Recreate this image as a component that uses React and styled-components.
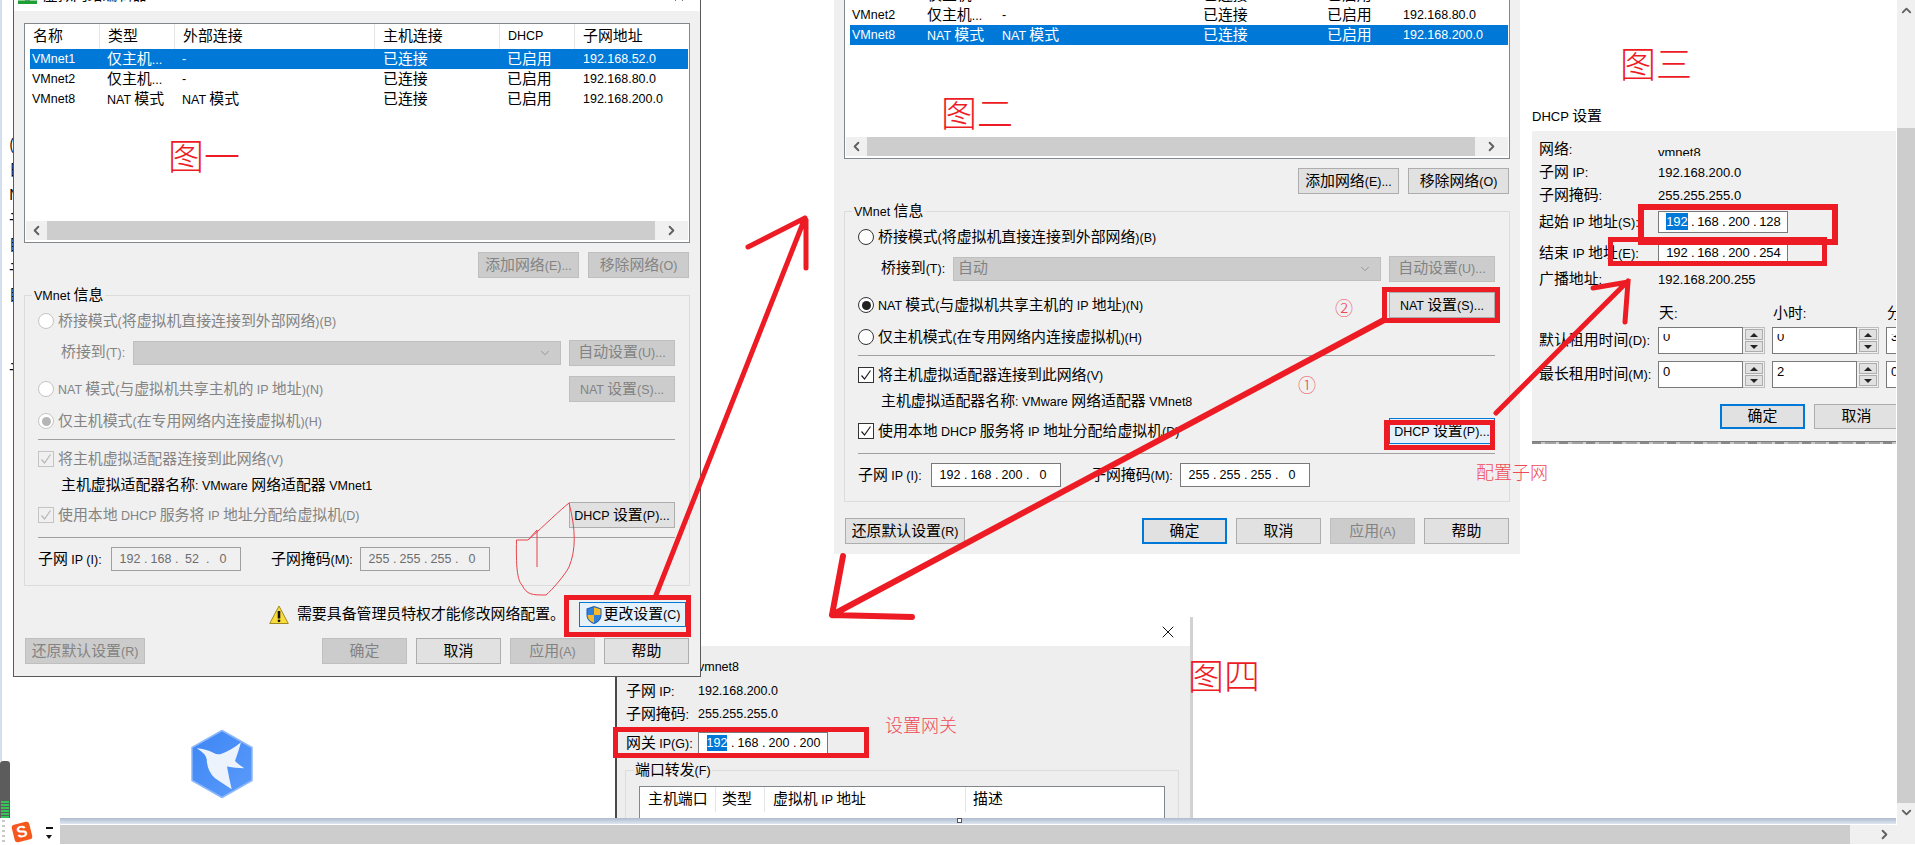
import React from "react";
import styled, { createGlobalStyle } from "styled-components";
import { ChevronDown, ChevronLeft, ChevronRight, ChevronUp, X } from "lucide-react";

const Global = createGlobalStyle`
  html, body { margin: 0; padding: 0; background: #fff; overflow: hidden; }
  body { font: 12.5px/1.2 "Liberation Sans", Arial, sans-serif; color: #000; }
  * { box-sizing: border-box; }
`;

const RED = "#ed1c24";
const GREY_TEXT = "#838383";

const Canvas = styled.div`
  position: relative;
  width: 1915px;
  height: 845px;
  overflow: hidden;
  background: #fff;
  display: flex;
  flex-direction: column;
`;
const Main = styled.div`
  height: 825px;
  display: flex;
`;
const Desktop = styled.div`
  position: relative;
  width: 1897px;
  display: flex;
  flex-direction: column;
  justify-content: flex-end;
`;
const ResizeBar = styled.div`
  position: relative;
  height: 7px;
  margin-left: 60px;
  margin-right: 1px;
  border-bottom: 1px solid #fff;
  background: linear-gradient(#aebbd0, #dfe6f0);
`;
const ResizeHandle = styled.span`
  position: absolute;
  left: 897px;
  top: 0;
  width: 5px;
  height: 5px;
  background: #fff;
  border: 1px solid #555;
`;
const VScroll = styled.div`
  width: 18px;
  display: flex;
  flex-direction: column;
  color: #606060;
`;
const VTrack = styled.div`
  height: ${(p) => p.$h}px;
  background: #f0f0f0;
  display: flex;
  justify-content: center;
  padding-top: ${(p) => p.$pt}px;
`;
const VThumb = styled.div`
  flex: 1;
  background: #cdcdcd;
`;
const HScrollRow = styled.div`
  height: 19px;
  margin-left: 60px;
  display: flex;
`;
const HThumb = styled.div`
  flex: 1;
  background: #cdcdcd;
`;
const HTrack = styled.div`
  width: 65px;
  background: #f0f0f0;
  color: #606060;
  display: flex;
  align-items: center;
  padding-left: 27px;
`;

const Cjk = styled.span`
  font-family: "Noto Sans CJK SC", sans-serif;
  font-size: 14.9px;
  line-height: 1;
`;
const Txt = ({ children }) => (
  <span>
    {String(children)
      .split(/([\u3000-\u303f\u4e00-\u9fff]+)/)
      .map((part, i) => (i % 2 ? <Cjk key={i}>{part}</Cjk> : part))}
  </span>
);

/* ---------- shared controls ---------- */
const Btn = styled.button`
  flex: none;
  width: ${(p) => p.$w}px;
  height: ${(p) => p.$h || 26}px;
  padding: 0;
  font: inherit;
  white-space: nowrap;
  display: flex;
  align-items: center;
  justify-content: center;
  color: ${(p) => (p.$kind === "off" ? GREY_TEXT : "#000")};
  background: ${(p) => (p.$kind === "off" ? "#cccccc" : p.$kind === "hot" ? "#e5f1fb" : "#e1e1e1")};
  border: ${(p) =>
    p.$kind === "default"
      ? "2px solid #0078d7"
      : p.$kind === "hot"
      ? "1px solid #0078d7"
      : p.$kind === "off"
      ? "1px solid #bfbfbf"
      : "1px solid #adadad"};
`;
const Radio = styled.span`
  flex: none;
  width: 16px;
  height: 16px;
  border-radius: 50%;
  background: #fff;
  border: 1px solid ${(p) => (p.$off ? "#c4c4c4" : "#333")};
  display: flex;
  align-items: center;
  justify-content: center;
  &::after {
    content: "";
    display: ${(p) => (p.$on ? "block" : "none")};
    width: 9px;
    height: 9px;
    border-radius: 50%;
    background: ${(p) => (p.$off ? "#b5b5b5" : "#222")};
  }
`;
const CheckBox = styled.span`
  flex: none;
  width: 16px;
  height: 16px;
  background: ${(p) => (p.$off ? "#f0f0f0" : "#fff")};
  border: 1px solid ${(p) => (p.$off ? "#c4c4c4" : "#333")};
  display: flex;
  align-items: center;
  justify-content: center;
  color: ${(p) => (p.$off ? "#b5b5b5" : "#222")};
`;
const Tick = () => (
  <svg width="12" height="12" viewBox="0 0 12 12" fill="none">
    <path d="M1.5 6.5 4.5 10 10.5 1.5" stroke="currentColor" strokeWidth="1.2" />
  </svg>
);
const OptionLabel = styled.span`
  margin-left: 4px;
  white-space: nowrap;
  color: ${(p) => (p.$off ? GREY_TEXT : "#000")};
`;
const IpBox = styled.div`
  flex: none;
  width: ${(p) => p.$w || 130}px;
  height: ${(p) => p.$h || 24}px;
  padding-left: 4px;
  display: flex;
  align-items: center;
  border: 1px solid ${(p) => (p.$off ? "#a0a0a0" : "#7a7a7a")};
  background: ${(p) => (p.$off ? "#f0f0f0" : "#fff")};
  color: ${(p) => (p.$off ? "#6d6d6d" : "#000")};
`;
const Octet = styled.span`
  width: 28px;
  flex: none;
  text-align: center;
`;
const Selected = styled.span`
  background: #0078d7;
  color: #fff;
  padding: 1px 0;
`;
const Dot = styled.span`
  width: 3px;
  flex: none;
  text-align: center;
`;
const Ip = ({ value, selected, ...rest }) => {
  const parts = value.split(".");
  return (
    <IpBox {...rest}>
      {parts.map((p, i) => (
        <React.Fragment key={i}>
          <Octet>{selected && i === 0 ? <Selected>{p}</Selected> : p}</Octet>
          {i < 3 && <Dot>.</Dot>}
        </React.Fragment>
      ))}
    </IpBox>
  );
};

/* ---------- virtual network editor window ---------- */
const EditorWindow = styled.section`
  position: absolute;
  left: ${(p) => p.$x}px;
  top: ${(p) => p.$y}px;
  width: ${(p) => p.$w}px;
  z-index: ${(p) => p.$z};
  ${(p) => (p.$framed ? "border: 1px solid #5a5a5a; border-top: 0;" : "")}
  background: #f0f0f0;
`;
const TitleBar = styled.header`
  height: 11px;
  background: #fff;
  display: flex;
  align-items: flex-end;
  padding: 0 14px 7px 4px;
  white-space: nowrap;
`;
const TitleText = styled.span`
  margin-left: 6px;
  flex: 1;
`;
const EditorBody = styled.div`
  padding: 12px 10px ${(p) => p.$pb}px;
`;
const ListBox = styled.div`
  height: 220px;
  background: #fff;
  border: 1px solid #82878c;
  display: flex;
  flex-direction: column;
`;
const ListArea = styled.div`
  flex: 1;
  overflow: hidden;
`;
const ColHead = styled.div`
  display: grid;
  grid-template-columns: 75px 75px 200px 125px 75px 1fr;
  height: 25px;
`;
const ColCell = styled.div`
  display: flex;
  align-items: center;
  padding-left: 8px;
  border-right: 1px solid #e5e5e5;
  &:last-child { border-right: 0; }
`;
const NetRow = styled.div`
  margin-left: 5px;
  margin-right: 1px;
  height: 20px;
  display: grid;
  grid-template-columns: 70px 75px 200px 125px 75px 1fr;
  align-items: center;
  background: ${(p) => (p.$sel ? "#0078d7" : "transparent")};
  color: ${(p) => (p.$sel ? "#fff" : "#000")};
`;
const NetCell = styled.div`
  padding-left: ${(p) => p.$pl}px;
  white-space: nowrap;
`;
const HBar = styled.div`
  height: 19px;
  margin: 0 1px 2px;
  display: flex;
  background: #f0f0f0;
  color: #606060;
`;
const HBarEnd = styled.div`
  width: 21px;
  display: flex;
  align-items: center;
  justify-content: center;
`;
const HBarEndWide = styled(HBarEnd)`
  width: 33px;
`;
const HBarThumb = styled.div`
  flex: 1;
  background: #cdcdcd;
`;
const ActionRow = styled.div`
  margin-top: 9px;
  display: flex;
  justify-content: flex-end;
  gap: 9px;
  padding-right: 1px;
`;
const Group = styled.div`
  position: relative;
  margin-top: 17px;
  height: 291px;
  border: 1px solid #dcdcdc;
  padding: 13px 14px 0 13px;
`;
const GroupLabel = styled.span`
  position: absolute;
  left: 7px;
  top: -9px;
  padding: 0 2px;
  background: #f0f0f0;
  white-space: nowrap;
  line-height: 16px;
`;
const OptionRow = styled.div`
  height: ${(p) => p.$h}px;
  margin-top: ${(p) => p.$mt}px;
  display: flex;
  align-items: center;
`;
const SpreadRow = styled(OptionRow)`
  justify-content: space-between;
`;
const LeftGroup = styled.div`
  display: flex;
  align-items: center;
`;
const BridgeLabel = styled.span`
  width: 95px;
  padding-left: 23px;
  flex: none;
  white-space: nowrap;
  color: ${(p) => (p.$off ? GREY_TEXT : "#000")};
`;
const SelectBox = styled.div`
  width: 428px;
  height: 24px;
  margin-right: 8px;
  flex: none;
  background: #cccccc;
  border: 1px solid #bfbfbf;
  color: ${GREY_TEXT};
  display: flex;
  align-items: center;
  justify-content: space-between;
  padding: 0 8px 0 4px;
`;
const Divider = styled.div`
  height: 1px;
  margin-top: ${(p) => p.$mt}px;
  background: #a0a0a0;
`;
const Indented = styled.span`
  padding-left: 23px;
  white-space: nowrap;
`;
const FieldLabel = styled.span`
  width: ${(p) => p.$w}px;
  margin-left: ${(p) => p.$ml || 0}px;
  flex: none;
  white-space: nowrap;
`;
const WarnRow = styled.div`
  margin-top: 16px;
  height: 25px;
  display: flex;
  align-items: center;
  justify-content: flex-end;
  padding-right: 4px;
`;
const WarnText = styled.span`
  margin: 0 14px 0 8px;
  white-space: nowrap;
`;
const ShieldBtn = styled(Btn)`
  gap: 1px;
`;
const Footer = styled.footer`
  margin-top: ${(p) => p.$mt}px;
  display: flex;
  padding: 0 1px;
  gap: 9px;
`;
const FooterLead = styled.div`
  flex: 1;
`;

const Shield = () => (
  <svg width="18" height="20" viewBox="0 0 18 20">
    <path d="M9 1 16.5 3.5V10c0 4.5-3.6 7.8-7.5 9C5.100 17.800 1.500 14.500 1.500 10V3.500Z" fill="#1c5fb5" />
    <path d="M9 2.200V10H2.500V4.300Z" fill="#2f80d8" />
    <path d="M9 2.200 15.500 4.300V10H9Z" fill="#f7b92c" />
    <path d="M2.500 10H9v7.900C5.500 16.700 2.500 13.900 2.500 10Z" fill="#f7b92c" />
    <path d="M9 10H15.500C15.500 13.900 12.500 16.700 9 17.900Z" fill="#2f80d8" />
  </svg>
);
const WarnIcon = () => (
  <svg width="20" height="20" viewBox="0 0 20 20">
    <path d="M10 1 19.300 18.500H.7Z" fill="#f7dc3c" stroke="#a08a20" strokeWidth="1" strokeLinejoin="round" />
    <rect x="8.700" y="6" width="2.600" height="7.500" fill="#111" />
    <circle cx="10" cy="15.800" r="1.400" fill="#111" />
  </svg>
);
const NetIcon = () => (
  <svg width="19" height="5" viewBox="0 0 19 5">
    <rect x="7" y="0" width="5" height="3" fill="#8f9aa3" />
    <rect x="0" y="1.500" width="19" height="3.500" fill="#1f9f32" />
  </svg>
);

const NETS = {
  VMnet0: ["VMnet0", "桥接模式", "自动桥接", "-", "-", "-"],
  VMnet1: ["VMnet1", "仅主机...", "-", "已连接", "已启用", "192.168.52.0"],
  VMnet2: ["VMnet2", "仅主机...", "-", "已连接", "已启用", "192.168.80.0"],
  VMnet8: ["VMnet8", "NAT 模式", "NAT 模式", "已连接", "已启用", "192.168.200.0"],
};
const HEADS = ["名称", "类型", "外部连接", "主机连接", "DHCP", "子网地址"];
const PADS = [2, 7, 7, 8, 7, 8];

const NetworkEditor = ({ locked, rows, selected, subnet, adapter, x, y, w, z }) => {
  const off = locked ? "off" : undefined;
  return (
    <EditorWindow $x={x} $y={y} $w={w} $z={z} $framed={locked}>
      <TitleBar>
        <NetIcon />
        <TitleText>
          <Txt>虚拟网络编辑器</Txt>
        </TitleText>
        <X size={14} strokeWidth={1.2} />
      </TitleBar>
      <EditorBody $pb={locked ? 12 : 10}>
        <ListBox>
          <ListArea>
            <ColHead>
              {HEADS.map((h) => (
                <ColCell key={h}>
                  <Txt>{h}</Txt>
                </ColCell>
              ))}
            </ColHead>
            {rows.map((r) => (
              <NetRow key={r} $sel={r === selected}>
                {NETS[r].map((c, i) => (
                  <NetCell key={i} $pl={PADS[i]}>
                    <Txt>{c}</Txt>
                  </NetCell>
                ))}
              </NetRow>
            ))}
          </ListArea>
          <HBar>
            <HBarEnd>
              <ChevronLeft size={15} strokeWidth={3} />
            </HBarEnd>
            <HBarThumb />
            <HBarEndWide>
              <ChevronRight size={15} strokeWidth={3} />
            </HBarEndWide>
          </HBar>
        </ListBox>
        <ActionRow>
          <Btn $w={101} $kind={off}><Txt>添加网络(E)...</Txt></Btn>
          <Btn $w={101} $kind={off}><Txt>移除网络(O)</Txt></Btn>
        </ActionRow>
        <Group>
          <GroupLabel><Txt>VMnet 信息</Txt></GroupLabel>
          <OptionRow $h={24} $mt={0}>
            <Radio $off={locked} />
            <OptionLabel $off={locked}><Txt>桥接模式(将虚拟机直接连接到外部网络)(B)</Txt></OptionLabel>
          </OptionRow>
          <OptionRow $h={27} $mt={6}>
            <BridgeLabel $off={locked}><Txt>桥接到(T):</Txt></BridgeLabel>
            <SelectBox>
              <span>{locked ? "" : <Txt>自动</Txt>}</span>
              <ChevronDown size={14} strokeWidth={1.2} />
            </SelectBox>
            <Btn $w={106} $kind="off"><Txt>自动设置(U)...</Txt></Btn>
          </OptionRow>
          <SpreadRow $h={26} $mt={10}>
            <LeftGroup>
              <Radio $off={locked} $on={!locked} />
              <OptionLabel $off={locked}><Txt>NAT 模式(与虚拟机共享主机的 IP 地址)(N)</Txt></OptionLabel>
            </LeftGroup>
            <Btn $w={106} $kind={off}><Txt>NAT 设置(S)...</Txt></Btn>
          </SpreadRow>
          <OptionRow $h={24} $mt={7}>
            <Radio $off={locked} $on={locked} />
            <OptionLabel $off={locked}><Txt>仅主机模式(在专用网络内连接虚拟机)(H)</Txt></OptionLabel>
          </OptionRow>
          <Divider $mt={6} />
          <OptionRow $h={24} $mt={7}>
            <CheckBox $off={locked}><Tick /></CheckBox>
            <OptionLabel $off={locked}><Txt>将主机虚拟适配器连接到此网络(V)</Txt></OptionLabel>
          </OptionRow>
          <OptionRow $h={24} $mt={2}>
            <Indented><Txt>{`主机虚拟适配器名称: VMware 网络适配器 ${adapter}`}</Txt></Indented>
          </OptionRow>
          <SpreadRow $h={26} $mt={5}>
            <LeftGroup>
              <CheckBox $off={locked}><Tick /></CheckBox>
              <OptionLabel $off={locked}><Txt>使用本地 DHCP 服务将 IP 地址分配给虚拟机(D)</Txt></OptionLabel>
            </LeftGroup>
            <Btn $w={106} $kind={locked ? undefined : "hot"}><Txt>DHCP 设置(P)...</Txt></Btn>
          </SpreadRow>
          <Divider $mt={9} />
          <OptionRow $h={24} $mt={9}>
            <FieldLabel $w={73}><Txt>子网 IP (I):</Txt></FieldLabel>
            <Ip value={subnet} $off={locked} />
            <FieldLabel $w={89} $ml={30}><Txt>子网掩码(M):</Txt></FieldLabel>
            <Ip value="255.255.255.0" $off={locked} />
          </OptionRow>
        </Group>
        {locked && (
          <WarnRow>
            <WarnIcon />
            <WarnText><Txt>需要具备管理员特权才能修改网络配置。</Txt></WarnText>
            <ShieldBtn $w={107} $h={25} $kind="hot">
              <Shield />
              <Txt>更改设置(C)</Txt>
            </ShieldBtn>
          </WarnRow>
        )}
        <Footer $mt={locked ? 11 : 16}>
          <Btn $w={120} $kind={off}><Txt>还原默认设置(R)</Txt></Btn>
          <FooterLead />
          <Btn $w={85} $kind={locked ? "off" : "default"}><Txt>确定</Txt></Btn>
          <Btn $w={85}><Txt>取消</Txt></Btn>
          <Btn $w={85} $kind="off"><Txt>应用(A)</Txt></Btn>
          <Btn $w={85}><Txt>帮助</Txt></Btn>
        </Footer>
      </EditorBody>
    </EditorWindow>
  );
};

/* ---------- DHCP dialog ---------- */
const DhcpDialog = styled.section`
  position: absolute;
  left: 1532px;
  top: 105px;
  width: 364px;
  z-index: 2;
  font-size: 13px;
`;
const DhcpTitle = styled.header`
  height: 26px;
  display: flex;
  align-items: center;
  padding-bottom: 4px;
  background: #fff;
`;
const DhcpBody = styled.div`
  height: 310px;
  padding: 7px 0 0 7px;
  background: #f0f0f0;
  overflow: hidden;
`;
const DhcpRow = styled.div`
  height: ${(p) => p.$h}px;
  margin-top: ${(p) => p.$mt}px;
  display: flex;
  align-items: center;
  white-space: nowrap;
`;
const DhcpLabel = styled.span`
  width: 119px;
  flex: none;
`;
const CutValue = styled.span`
  height: 11px;
  overflow: hidden;
  line-height: 15px;
  margin-top: 2px;
`;
const DhcpHead = styled.span`
  width: 114px;
  padding-left: 1px;
  flex: none;
`;
const DhcpStrip = styled.div`
  height: 3px;
  border-top: 1px solid #7d7d7d;
  background: repeating-linear-gradient(90deg, #8a8a8a 0 9px, #c6c6c6 9px 13px, #a2a2a2 13px 24px, #d0d0d0 24px 27px);
`;
const Spin = styled.div`
  width: 107px;
  height: 27px;
  margin-right: 7px;
  flex: none;
  display: flex;
`;
const SpinValue = styled.div`
  width: 85px;
  background: #fff;
  border: 1px solid #7a7a7a;
  padding: 0 0 6px 4px;
  display: flex;
  align-items: center;
`;
const SpinText = styled.span`
  height: ${(p) => (p.$cut ? "8px" : "auto")};
  overflow: hidden;
  line-height: ${(p) => (p.$cut ? "5px" : "inherit")};
`;
const SpinSide = styled.div`
  flex: 1;
  background: #f0f0f0;
  border: 1px solid #bdbdbd;
  border-left: 0;
  padding: 1px;
  display: flex;
  flex-direction: column;
  gap: 1px;
`;
const SpinBtn = styled.span`
  flex: 1;
  margin-left: 1px;
  background: #e1e1e1;
  border: 1px solid #adadad;
  display: flex;
  align-items: center;
  justify-content: center;
  &::after {
    content: "";
    border-left: 4px solid transparent;
    border-right: 4px solid transparent;
    ${(p) => (p.$up ? "border-bottom: 4px solid #222;" : "border-top: 4px solid #222;")}
  }
`;
const Spinner = ({ value, cut }) => (
  <Spin>
    <SpinValue><SpinText $cut={cut}>{value}</SpinText></SpinValue>
    <SpinSide>
      <SpinBtn $up />
      <SpinBtn />
    </SpinSide>
  </Spin>
);
const DhcpButtons = styled.div`
  margin: 16px 0 0 181px;
  display: flex;
  gap: 9px;
`;

/* ---------- NAT dialog ---------- */
const NatDialog = styled.section`
  position: absolute;
  left: 615px;
  top: 617px;
  width: 578px;
  height: 201px;
  z-index: 0;
  background: #fff;
  border-right: 3px solid #d2d2d2;
  overflow: hidden;
`;
const NatTitle = styled.header`
  height: 29px;
  display: flex;
  align-items: center;
  justify-content: flex-end;
  padding-right: 12px;
`;
const NatBody = styled.div`
  height: 172px;
  background: #eeeeee;
  border-left: 2px solid #4a4a4a;
  padding: 10px 0 0 9px;
`;
const NatRow = styled.div`
  height: 22px;
  margin-top: ${(p) => p.$mt}px;
  display: flex;
  align-items: center;
  white-space: nowrap;
`;
const NatLabel = styled.span`
  width: 72px;
  flex: none;
`;
const PortGroup = styled.div`
  position: relative;
  margin: 16px 11px 0 -1px;
  height: 120px;
  border: 1px solid #dcdcdc;
  padding: 15px 13px 0;
`;
const PortLabel = styled.span`
  position: absolute;
  left: 8px;
  top: -9px;
  padding: 0 1px;
  background: #eeeeee;
  line-height: 16px;
  white-space: nowrap;
`;
const PortList = styled.div`
  height: 90px;
  background: #fff;
  border: 1px solid #82878c;
`;
const PortHead = styled.div`
  display: grid;
  grid-template-columns: 76px 49px 201px 1fr;
  height: 25px;
`;
const PortCell = styled.div`
  display: flex;
  align-items: center;
  padding-left: ${(p) => p.$pl}px;
  border-right: 1px solid #e5e5e5;
  &:last-child { border-right: 0; }
`;

/* ---------- overlay annotations ---------- */
const Markup = styled.svg`
  position: absolute;
  left: 0;
  top: 0;
  z-index: 5;
  pointer-events: none;
`;
const RedBox = styled.div`
  position: absolute;
  left: ${(p) => p.$x}px;
  top: ${(p) => p.$y}px;
  width: ${(p) => p.$w}px;
  height: ${(p) => p.$h}px;
  border: ${(p) => p.$t}px solid ${RED};
  z-index: 5;
`;
const FigureNote = styled.span`
  position: absolute;
  left: ${(p) => p.$x}px;
  top: ${(p) => p.$y}px;
  z-index: 6;
  color: ${RED};
  font: 300 36px/36px "Noto Sans CJK SC", sans-serif;
  white-space: nowrap;
`;
const HandNote = styled.span`
  position: absolute;
  left: ${(p) => p.$x}px;
  top: ${(p) => p.$y}px;
  z-index: 6;
  color: #ee4a55;
  font: 300 18px/20px "Noto Sans CJK SC", sans-serif;
  white-space: nowrap;
`;

/* ---------- left edge bits ---------- */
const EdgeStrip = styled.div`
  position: absolute;
  left: 0;
  top: 0;
  width: 2px;
  height: 761px;
  background: #d3deef;
`;
const Gauge = styled.div`
  position: absolute;
  left: 0;
  top: 761px;
  width: 10px;
  height: 57px;
  border-radius: 3px 3px 0 0;
  background: #5c5c5c;
  &::after {
    content: "";
    position: absolute;
    left: 1px;
    right: 1px;
    bottom: 0;
    height: 17px;
    background: repeating-linear-gradient(#35c45a 0 2px, #5c5c5c 2px 3px);
  }
`;
const Peek = styled.div`
  position: absolute;
  left: 9px;
  top: 131px;
  width: 4px;
  overflow: hidden;
  z-index: 1;
  display: flex;
  flex-direction: column;
  font: 15px/25px "Noto Sans CJK SC", sans-serif;
  white-space: nowrap;
`;
const PeekLine = styled.span`
  height: 25px;
`;
const ImeDots = styled.div`
  position: absolute;
  left: 2px;
  top: 820px;
  width: 3px;
  height: 23px;
  background: repeating-linear-gradient(#c8c8c8 0 2px, #fff 2px 5px);
`;
const ImeLogo = styled.div`
  position: absolute;
  left: 13px;
  top: 823px;
  width: 18px;
  height: 18px;
  border-radius: 3px;
  transform: rotate(-14deg);
  background: #f4581c;
  color: #fff;
  font: 700 16px/18px "Liberation Sans", sans-serif;
  text-align: center;
`;
const ImeDash = styled.span`
  position: absolute;
  left: 46px;
  top: 827px;
  width: 7px;
  height: 2px;
  background: #111;
`;
const ImeCaret = styled.span`
  position: absolute;
  left: 46px;
  top: 835px;
  border-left: 3.500px solid transparent;
  border-right: 3.500px solid transparent;
  border-top: 4px solid #111;
`;
const BirdBadge = styled.svg`
  position: absolute;
  left: 190px;
  top: 729px;
`;
const Bird = () => (
  <BirdBadge width="64" height="70" viewBox="0 0 64 70">
    <defs>
      <linearGradient id="hex" x1="0" y1="0" x2="1" y2="1">
        <stop offset="0" stopColor="#3d86f5" />
        <stop offset="1" stopColor="#5b9bfa" />
      </linearGradient>
    </defs>
    <path d="M32 1.500 62 18.500V51.500L32 68.500 2 51.500V18.500Z" fill="url(#hex)" stroke="#8db8fb" strokeWidth="1.500" strokeLinejoin="round" />
    <path
      d="M6.700 19.300Q16 20 23.300 23.700 27 26 31 25 42 21 51 13.300 48 24 45 32 49 36 54.300 39.300 45 39 37 37.500 39 49 41.700 60.300 32 54 25 49.300 17 42 16.700 30 16 25 6.700 19.300Z"
      fill="#edf3fd"
    />
  </BirdBadge>
);

const PEEK = ["(", "日", "N", "子", "目", "子", "目", "", "", "子"];

export default function App() {
  return (
    <Canvas>
      <Global />
      <Main>
        <Desktop>
          <NatDialog>
            <NatTitle>
              <X size={20} strokeWidth={1.1} />
            </NatTitle>
            <NatBody>
              <NatRow $mt={0}><NatLabel><Txt>网络:</Txt></NatLabel>vmnet8</NatRow>
              <NatRow $mt={2}><NatLabel><Txt>子网 IP:</Txt></NatLabel>192.168.200.0</NatRow>
              <NatRow $mt={1}><NatLabel><Txt>子网掩码:</Txt></NatLabel>255.255.255.0</NatRow>
              <NatRow $mt={7}>
                <NatLabel><Txt>网关 IP(G):</Txt></NatLabel>
                <Ip value="192.168.200.200" $h={22} selected />
              </NatRow>
              <PortGroup>
                <PortLabel><Txt>端口转发(F)</Txt></PortLabel>
                <PortList>
                  <PortHead>
                    <PortCell $pl={8}><Txt>主机端口</Txt></PortCell>
                    <PortCell $pl={6}><Txt>类型</Txt></PortCell>
                    <PortCell $pl={8}><Txt>虚拟机 IP 地址</Txt></PortCell>
                    <PortCell $pl={7}><Txt>描述</Txt></PortCell>
                  </PortHead>
                </PortList>
              </PortGroup>
            </NatBody>
          </NatDialog>

          <NetworkEditor
            locked
            x={13}
            y={0}
            w={688}
            z={3}
            rows={["VMnet1", "VMnet2", "VMnet8"]}
            selected="VMnet1"
            subnet="192.168.52.0"
            adapter="VMnet1"
          />
          <NetworkEditor
            x={834}
            y={-84}
            w={686}
            z={1}
            rows={["VMnet0", "VMnet1", "VMnet2", "VMnet8"]}
            selected="VMnet8"
            subnet="192.168.200.0"
            adapter="VMnet8"
          />

          <DhcpDialog>
            <DhcpTitle><Txt>DHCP 设置</Txt></DhcpTitle>
            <DhcpBody>
              <DhcpRow $h={23} $mt={0}><DhcpLabel><Txt>网络:</Txt></DhcpLabel><CutValue>vmnet8</CutValue></DhcpRow>
              <DhcpRow $h={23} $mt={0}><DhcpLabel><Txt>子网 IP:</Txt></DhcpLabel>192.168.200.0</DhcpRow>
              <DhcpRow $h={23} $mt={0}><DhcpLabel><Txt>子网掩码:</Txt></DhcpLabel>255.255.255.0</DhcpRow>
              <DhcpRow $h={22} $mt={4}><DhcpLabel><Txt>起始 IP 地址(S):</Txt></DhcpLabel><Ip value="192.168.200.128" $h={22} selected /></DhcpRow>
              <DhcpRow $h={22} $mt={9}><DhcpLabel><Txt>结束 IP 地址(E):</Txt></DhcpLabel><Ip value="192.168.200.254" $h={22} /></DhcpRow>
              <DhcpRow $h={23} $mt={4}><DhcpLabel><Txt>广播地址:</Txt></DhcpLabel>192.168.200.255</DhcpRow>
              <DhcpRow $h={20} $mt={12}>
                <DhcpLabel />
                <DhcpHead><Txt>天:</Txt></DhcpHead>
                <DhcpHead><Txt>小时:</Txt></DhcpHead>
                <DhcpHead><Txt>分钟:</Txt></DhcpHead>
              </DhcpRow>
              <DhcpRow $h={27} $mt={4}>
                <DhcpLabel><Txt>默认租用时间(D):</Txt></DhcpLabel>
                <Spinner value="0" cut /><Spinner value="0" cut /><Spinner value="30" cut />
              </DhcpRow>
              <DhcpRow $h={27} $mt={7}>
                <DhcpLabel><Txt>最长租用时间(M):</Txt></DhcpLabel>
                <Spinner value="0" /><Spinner value="2" /><Spinner value="0" />
              </DhcpRow>
              <DhcpButtons>
                <Btn $w={85} $h={25} $kind="default"><Txt>确定</Txt></Btn>
                <Btn $w={85} $h={25}><Txt>取消</Txt></Btn>
              </DhcpButtons>
            </DhcpBody>
            <DhcpStrip />
          </DhcpDialog>

          <EdgeStrip />
          <Peek>
            {PEEK.map((c, i) => (
              <PeekLine key={i}>{c}</PeekLine>
            ))}
          </Peek>
          <Bird />

          <RedBox $x={564} $y={595} $w={127} $h={42} $t={5} />
          <RedBox $x={1382} $y={287} $w={118} $h={36} $t={5} />
          <RedBox $x={1384} $y={420} $w={111} $h={30} $t={5} />
          <RedBox $x={1638} $y={204} $w={200} $h={41} $t={6} />
          <RedBox $x={1608} $y={237} $w={219} $h={29} $t={5} />
          <RedBox $x={613} $y={727} $w={256} $h={31} $t={5} />

          <Markup width="1897" height="825" viewBox="0 0 1897 825" fill="none">
            <g stroke={RED} strokeWidth="5" strokeLinecap="round">
              <path d="M656 595 805 218M748 247 805 218M806 220V268" />
              <path d="M1384 320 832 615M843 556 832 615M832 615 912 617" strokeWidth="6" />
              <path d="M1496 413 1628 281M1593 288 1628 282 1625 322" />
            </g>
            <path
              d="M569 503C560 510 545 525 528 540L516.500 540C516 565 517 580 522 585C527 595 532 595 546 595C552 590 565 575 569 567C576 550 576 530 569 503ZM528 540 537 530V567"
              stroke="#e8434b"
              strokeWidth="1"
            />
          </Markup>

          <FigureNote $x={168} $y={136}>图一</FigureNote>
          <FigureNote $x={941} $y={93}>图二</FigureNote>
          <FigureNote $x={1620} $y={44}>图三</FigureNote>
          <FigureNote $x={1188} $y={656}>图四</FigureNote>
          <HandNote $x={1335} $y={297}>②</HandNote>
          <HandNote $x={1298} $y={374}>①</HandNote>
          <HandNote $x={1476} $y={461}>配置子网</HandNote>
          <HandNote $x={885} $y={714}>设置网关</HandNote>

          <ResizeBar><ResizeHandle /></ResizeBar>
        </Desktop>
        <VScroll>
          <VTrack $h={128} $pt={3}><ChevronUp size={15} strokeWidth={3} /></VTrack>
          <VThumb />
          <VTrack $h={22} $pt={2}><ChevronDown size={15} strokeWidth={3} /></VTrack>
        </VScroll>
      </Main>
      <HScrollRow>
        <HThumb />
        <HTrack><ChevronRight size={15} strokeWidth={3} /></HTrack>
      </HScrollRow>
      <Gauge />
      <ImeDots />
      <ImeLogo>S</ImeLogo>
      <ImeDash />
      <ImeCaret />
    </Canvas>
  );
}
